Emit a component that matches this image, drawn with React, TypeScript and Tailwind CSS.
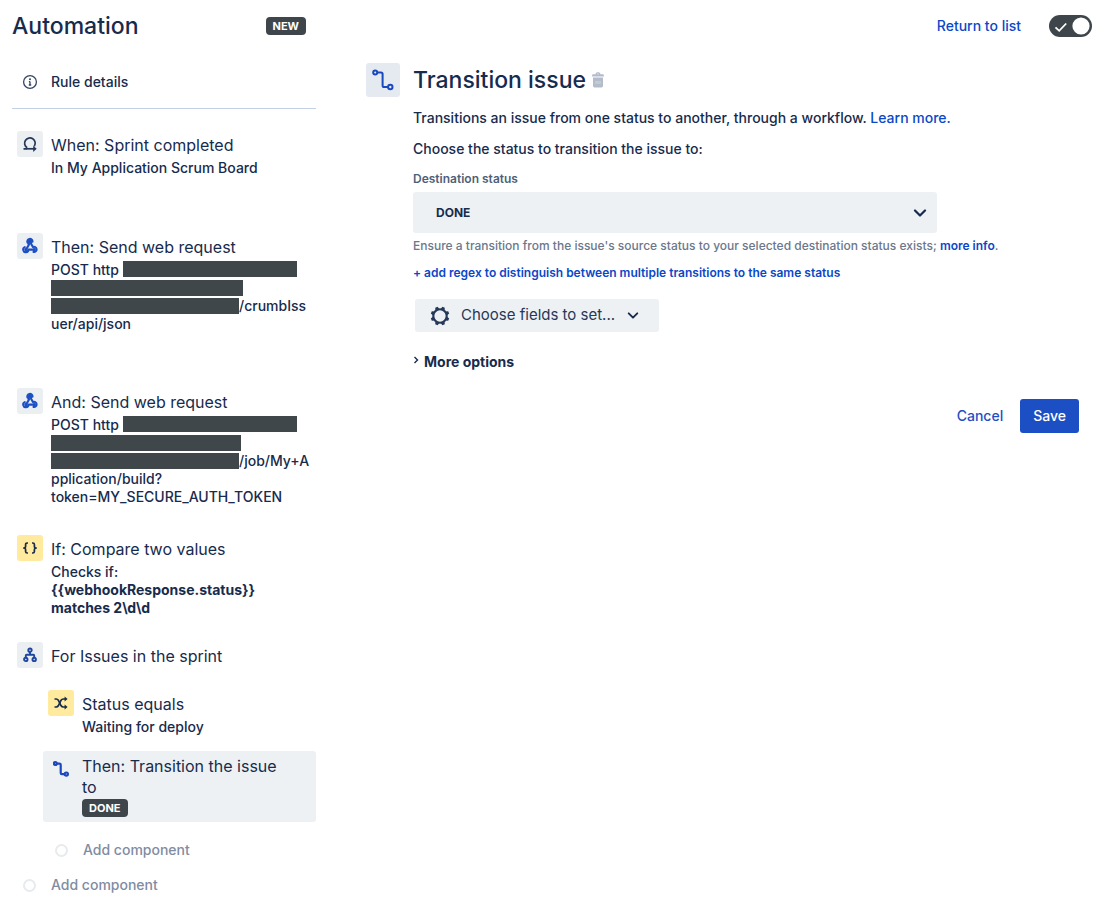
import type { ReactNode } from "react";

type IconProps = { className?: string };

function InfoIcon() {
  return (
    <svg viewBox="0 0 16 16" className="size-4" fill="none" aria-hidden="true">
      <circle cx="8" cy="8" r="6.4" stroke="#344563" strokeWidth="1.3" />
      <circle cx="8" cy="5.3" r="1" fill="#344563" />
      <path d="M8 7.4v3.6M6.9 7.6H8M6.8 11h2.4" stroke="#344563" strokeWidth="1.3" />
    </svg>
  );
}

function SprintIcon() {
  return (
    <svg viewBox="0 0 16 16" className="size-4" fill="none" stroke="#253858" strokeWidth="1.7" aria-hidden="true">
      <path d="M1.500 12.800h3.500M5.200 11.800A5.300 5.300 0 1 1 12.300 10.200" />
      <path d="M4.600 12.800h8" />
      <path d="M11.200 9.700l3.500 3.100-3.500 3.100z" fill="#253858" stroke="none" />
    </svg>
  );
}

function WebhookIcon() {
  return (
    <svg viewBox="0 0 18 18" className="size-[18px]" fill="none" stroke="#1d4fc4" strokeWidth="2.100" strokeLinecap="round" strokeLinejoin="round" aria-hidden="true">
      <path d="M6.500 5.500A2.600 2.600 0 1 1 11.500 4.700" />
      <path d="M9 4.700l2.900 5.300a2.600 2.600 0 1 1 .6 4.900" />
      <path d="M7.300 6.800L8.200 7.300 5 12.600" />
      <path d="M3.800 10.100a2.600 2.600 0 1 0 3.600 2.500h5.900" />
      <circle cx="9" cy="4.700" r="1.200" fill="#1d4fc4" />
      <circle cx="4.900" cy="12.600" r=".6" fill="#1d4fc4" />
      <circle cx="13.200" cy="12.600" r=".6" fill="#1d4fc4" />
    </svg>
  );
}

function BracesIcon() {
  return (
    <svg viewBox="0 0 16 14" className="h-[14px] w-4" fill="none" stroke="#172b4d" strokeWidth="1.7" strokeLinejoin="round" aria-hidden="true">
      <path d="M6 2H5.2C4.1 2 3.6 2.6 3.6 3.6v1.6C3.6 6.2 3 7 1.8 7 3 7 3.6 7.8 3.6 8.8v1.6c0 1 .5 1.6 1.6 1.6H6" />
      <path d="M10 2h.8c1.1 0 1.6.6 1.6 1.6v1.6c0 1 .6 1.8 1.8 1.8-1.2 0-1.8.8-1.8 1.8v1.6c0 1-.5 1.6-1.6 1.6H10" />
    </svg>
  );
}

function BranchIcon() {
  return (
    <svg viewBox="0 0 16 16" className="size-4" fill="none" stroke="#1f479f" strokeWidth="1.9" aria-hidden="true">
      <circle cx="8" cy="3.2" r="1.700" />
      <circle cx="3.800" cy="12.400" r="1.700" />
      <circle cx="12.200" cy="12.400" r="1.700" />
      <path d="M8 5v2.800M3.800 10.600V8.600c0-.5.3-.8.8-.8h6.800c.5 0 .8.300.8.8v2" />
    </svg>
  );
}

function ShuffleIcon() {
  return (
    <svg viewBox="0 0 16 14" className="h-[14px] w-4" fill="none" stroke="#172b4d" strokeWidth="1.700" aria-hidden="true">
      <path d="M1.500 3h1.700c1 0 1.600.4 2.100 1.200l2.800 5.600c.5.8 1.100 1.200 2.100 1.200h2.300" />
      <path d="M1.500 11h1.700c1 0 1.600-.4 2.100-1.200l2.800-5.600C8.600 3.400 9.200 3 10.200 3h2.300" />
      <path d="M11.600.4l3 2.600-3 2.600zM11.600 8.400l3 2.600-3 2.600z" fill="#172b4d" stroke="none" />
    </svg>
  );
}

function TransitionIcon({ className }: IconProps) {
  return (
    <svg viewBox="0 0 22 22" className={className} fill="none" stroke="#1a48bd" aria-hidden="true">
      <circle cx="3.200" cy="3.500" r="2" />
      <circle cx="18.300" cy="18" r="2.200" />
      <path d="M5.200 3.500h3.800c1 0 1.600.6 1.600 1.600v11.300c0 1 .6 1.600 1.600 1.600h3.800" />
    </svg>
  );
}

function TrashIcon() {
  return (
    <svg viewBox="0 0 12 16" className="h-4 w-3" fill="#b3bccb" aria-hidden="true">
      <path fillRule="evenodd" d="M3.500 2.300C3.800.9 4.600.3 6 .3s2.200.6 2.500 2h2c.9 0 1.400.500 1.400 1.300v1H.1v-1c0-.8.5-1.300 1.400-1.300zM5 2.300h2C6.900 1.800 6.600 1.500 6 1.500s-.9.300-1 .8z" />
      <path d="M1 5.500h10v7.900c0 1.400-.8 2.100-2.100 2.100H3.100C1.800 15.500 1 14.800 1 13.400z" />
      <path d="M4 9v3M6 9v3M8 9v3" stroke="#d8d7cf" strokeWidth="1" />
    </svg>
  );
}

function GearIcon() {
  const angles = [0, 45, 90, 135, 180, 225, 270, 315];
  return (
    <svg viewBox="0 0 20 20" className="size-5" fill="none" aria-hidden="true">
      <circle cx="10" cy="10" r="6.700" stroke="#253858" strokeWidth="2.100" />
      {angles.map((angle) => (
        <path key={angle} d="M8.700.6h2.600l.9 2.900H7.800z" fill="#253858" transform={`rotate(${angle + 22.5} 10 10)`} />
      ))}
    </svg>
  );
}

function Chevron({ className }: IconProps) {
  return (
    <svg viewBox="0 0 14 8" className={className} fill="none" stroke="#172b4d" strokeWidth="2.200" strokeLinecap="round" strokeLinejoin="round" aria-hidden="true">
      <path d="M2 1.500l5 5 5-5" />
    </svg>
  );
}

function Badge({ children }: { children: ReactNode }) {
  return (
    <span className="inline-flex h-[18px] items-center rounded bg-[#3e464b] px-[7px] text-[11px] font-bold leading-none text-white">
      {children}
    </span>
  );
}

function Redacted({ className }: IconProps) {
  return <span className={`block h-4 bg-[#3f474a] ${className}`} />;
}

type StepProps = {
  icon: ReactNode;
  tile?: string;
  title: string;
  children?: ReactNode;
  className?: string;
};

function Step({ icon, tile = "bg-[#ebeff2]", title, children, className = "" }: StepProps) {
  return (
    <li className={`flex gap-2 ${className}`}>
      <span className={`flex size-[26px] shrink-0 items-center justify-center rounded-[3px] ${tile}`}>{icon}</span>
      <div className="min-w-0">
        <h3 className="text-base leading-7">{title}</h3>
        <div className="text-sm font-[450] leading-[18px]">{children}</div>
      </div>
    </li>
  );
}

function AddComponent() {
  return (
    <button type="button" className="flex items-center gap-[15px] text-sm font-medium leading-5 text-[#7f8ca2]">
      <span className="size-[13px] rounded-full border-2 border-[#e6ebef]" />
      Add component
    </button>
  );
}

function Sidebar() {
  return (
    <aside className="w-[304px] shrink-0">
      <div className="flex h-[52px] items-center justify-between pr-[10px]">
        <h1 className="text-[23px] font-medium">Automation</h1>
        <Badge>NEW</Badge>
      </div>
      <a href="#details" className="flex h-[57px] items-center gap-[13px] border-b border-[#c3cfe2] pl-[10px] pt-[3px] text-sm font-medium">
        <InfoIcon />
        Rule details
      </a>

      <ul className="pl-[5px] pt-[22px]">
        <Step icon={<SprintIcon />} title="When: Sprint completed">
          In My Application Scrum Board
        </Step>
        <Step icon={<WebhookIcon />} title="Then: Send web request" className="mt-14">
          <div className="flex gap-1">
            POST http
            <Redacted className="w-[174px]" />
          </div>
          <div className="flex h-[18px] items-center">
            <Redacted className="w-48" />
          </div>
          <div className="flex items-center">
            <Redacted className="w-[188px]" />
            /crumbIss
          </div>
          uer/api/json
        </Step>
        <Step icon={<WebhookIcon />} title="And: Send web request" className="mt-[55px]">
          <div className="flex gap-1">
            POST http
            <Redacted className="w-[174px]" />
          </div>
          <div className="flex h-[18px] items-center">
            <Redacted className="w-[190px]" />
          </div>
          <div className="flex items-center">
            <Redacted className="w-[188px]" />
            /job/My+A
          </div>
          <div>pplication/build?</div>
          token=MY_SECURE_AUTH_TOKEN
        </Step>
        <Step icon={<BracesIcon />} tile="bg-[#ffea9e]" title="If: Compare two values" className="mt-[29px]">
          Checks if:
          <div className="font-bold">{"{{webhookResponse.status}}"}</div>
          <div className="font-bold">{"matches 2\\d\\d"}</div>
        </Step>
        <Step icon={<BranchIcon />} title="For Issues in the sprint" className="mt-[25px]" />
        <li>
          <ul className="pl-[26px] pt-5">
            <Step icon={<ShuffleIcon />} tile="bg-[#ffea9e]" title="Status equals" className="pl-[5px]">
              Waiting for deploy
            </Step>
            <li className="mt-[15px] flex gap-2 rounded-[3px] bg-[#edf1f4] py-[5px] pl-[5px] pr-6">
              <span className="flex size-[26px] shrink-0 items-center justify-center">
                <TransitionIcon className="size-4 stroke-3" />
              </span>
              <div>
                <h3 className="text-base leading-[21px]">
                  Then: Transition the issue
                  <br />
                  to
                </h3>
                <div className="flex pt-px">
                  <Badge>DONE</Badge>
                </div>
              </div>
            </li>
            <li className="pl-3 pt-[18px]">
              <AddComponent />
            </li>
          </ul>
        </li>
        <li className="pl-[6px] pt-[15px]">
          <AddComponent />
        </li>
      </ul>
    </aside>
  );
}

function TransitionForm() {
  return (
    <form className="flex flex-col items-start pb-6 pr-[13px]" onSubmit={(event) => event.preventDefault()}>
      <div className="flex h-[45px] items-center gap-[13px] pt-[11px]">
        <span className="flex size-[34px] items-center justify-center rounded-[3px] bg-[#e5eaf0]">
          <TransitionIcon className="size-[22px] stroke-2" />
        </span>
        <h2 className="flex items-center gap-1.5 text-[23px] font-medium">
          Transition issue
          <button type="button" aria-label="Delete component">
            <TrashIcon />
          </button>
        </h2>
      </div>
      <div className="flex w-full flex-col items-start pl-[47px]">
        <p className="mt-[11px] text-sm font-medium leading-5">
          Transitions an issue from one status to another, through a workflow.{" "}
          <a href="#learn" className="text-[#0b47c7]">Learn more.</a>
        </p>
        <p className="mt-[11px] text-sm font-medium leading-5">Choose the status to transition the issue to:</p>
        <label htmlFor="destination" className="mt-3 text-xs font-semibold leading-4 text-[#505f79]">
          Destination status
        </label>
        <div className="relative mt-[5px] w-full max-w-[524px]">
          <select id="destination" className="h-[41px] w-full appearance-none rounded-[3px] bg-[#edf1f4] pl-[23px] text-xs font-bold">
            <option>DONE</option>
          </select>
          <Chevron className="pointer-events-none absolute right-[10px] top-[17px] h-2 w-[14px]" />
        </div>
        <p className="mt-[5px] text-xs font-medium leading-4 text-[#6b778c]">
          Ensure a transition from the issue's source status to your selected destination status exists;{" "}
          <a href="#info" className="font-semibold text-[#0b47c7]">more info</a>.
        </p>
        <button type="button" className="mt-[11px] text-xs font-semibold leading-4 text-[#0b47c7]">
          + add regex to distinguish between multiple transitions to the same status
        </button>
        <button type="button" className="ml-0.5 mt-[18px] flex h-[33px] items-center rounded-[3px] bg-[#edf1f4] pl-[15px] pr-5 text-[15px] text-[#253858]">
          <GearIcon />
          <span className="ml-[11px] mr-3">Choose fields to set...</span>
          <Chevron className="h-[7px] w-3" />
        </button>
        <button type="button" className="mt-5 flex items-center gap-[5px] text-sm font-bold leading-5">
          <svg viewBox="0 0 6 8" className="mb-1 h-2 w-1.5" fill="none" stroke="#172b4d" strokeWidth="1.400" aria-hidden="true">
            <path d="M1.500 1l3 3-3 3" />
          </svg>
          More options
        </button>
        <div className="mt-[27px] flex w-full items-center justify-end gap-[17px] text-sm font-medium">
          <button type="button" className="text-[#1d4fc4]">Cancel</button>
          <button type="submit" className="h-[34px] rounded-[3px] bg-[#1d4fc4] px-[13px] text-white">Save</button>
        </div>
      </div>
    </form>
  );
}

export default function App() {
  return (
    <div className="flex min-h-screen gap-[50px] bg-white pl-3 pr-3 font-['Inter','Liberation_Sans',sans-serif] text-[#172b4d]">
      <Sidebar />
      <main className="min-w-0 flex-1">
        <div className="flex h-[52px] items-center justify-end gap-7 text-sm font-medium">
          <a href="#list" className="text-[#0b47c7]">Return to list</a>
          <label className="relative flex">
            <input type="checkbox" role="switch" defaultChecked aria-label="Rule enabled" className="h-[22px] w-[43px] appearance-none rounded-full bg-[#3e464b]" />
            <svg viewBox="0 0 43 22" className="pointer-events-none absolute inset-0" fill="none" aria-hidden="true">
              <path d="M6.500 12.300l3.700 3.500 7-7.300" stroke="#fff" strokeWidth="1.800" />
              <circle cx="32" cy="11" r="8.600" fill="#fff" />
            </svg>
          </label>
        </div>
        <TransitionForm />
      </main>
    </div>
  );
}
